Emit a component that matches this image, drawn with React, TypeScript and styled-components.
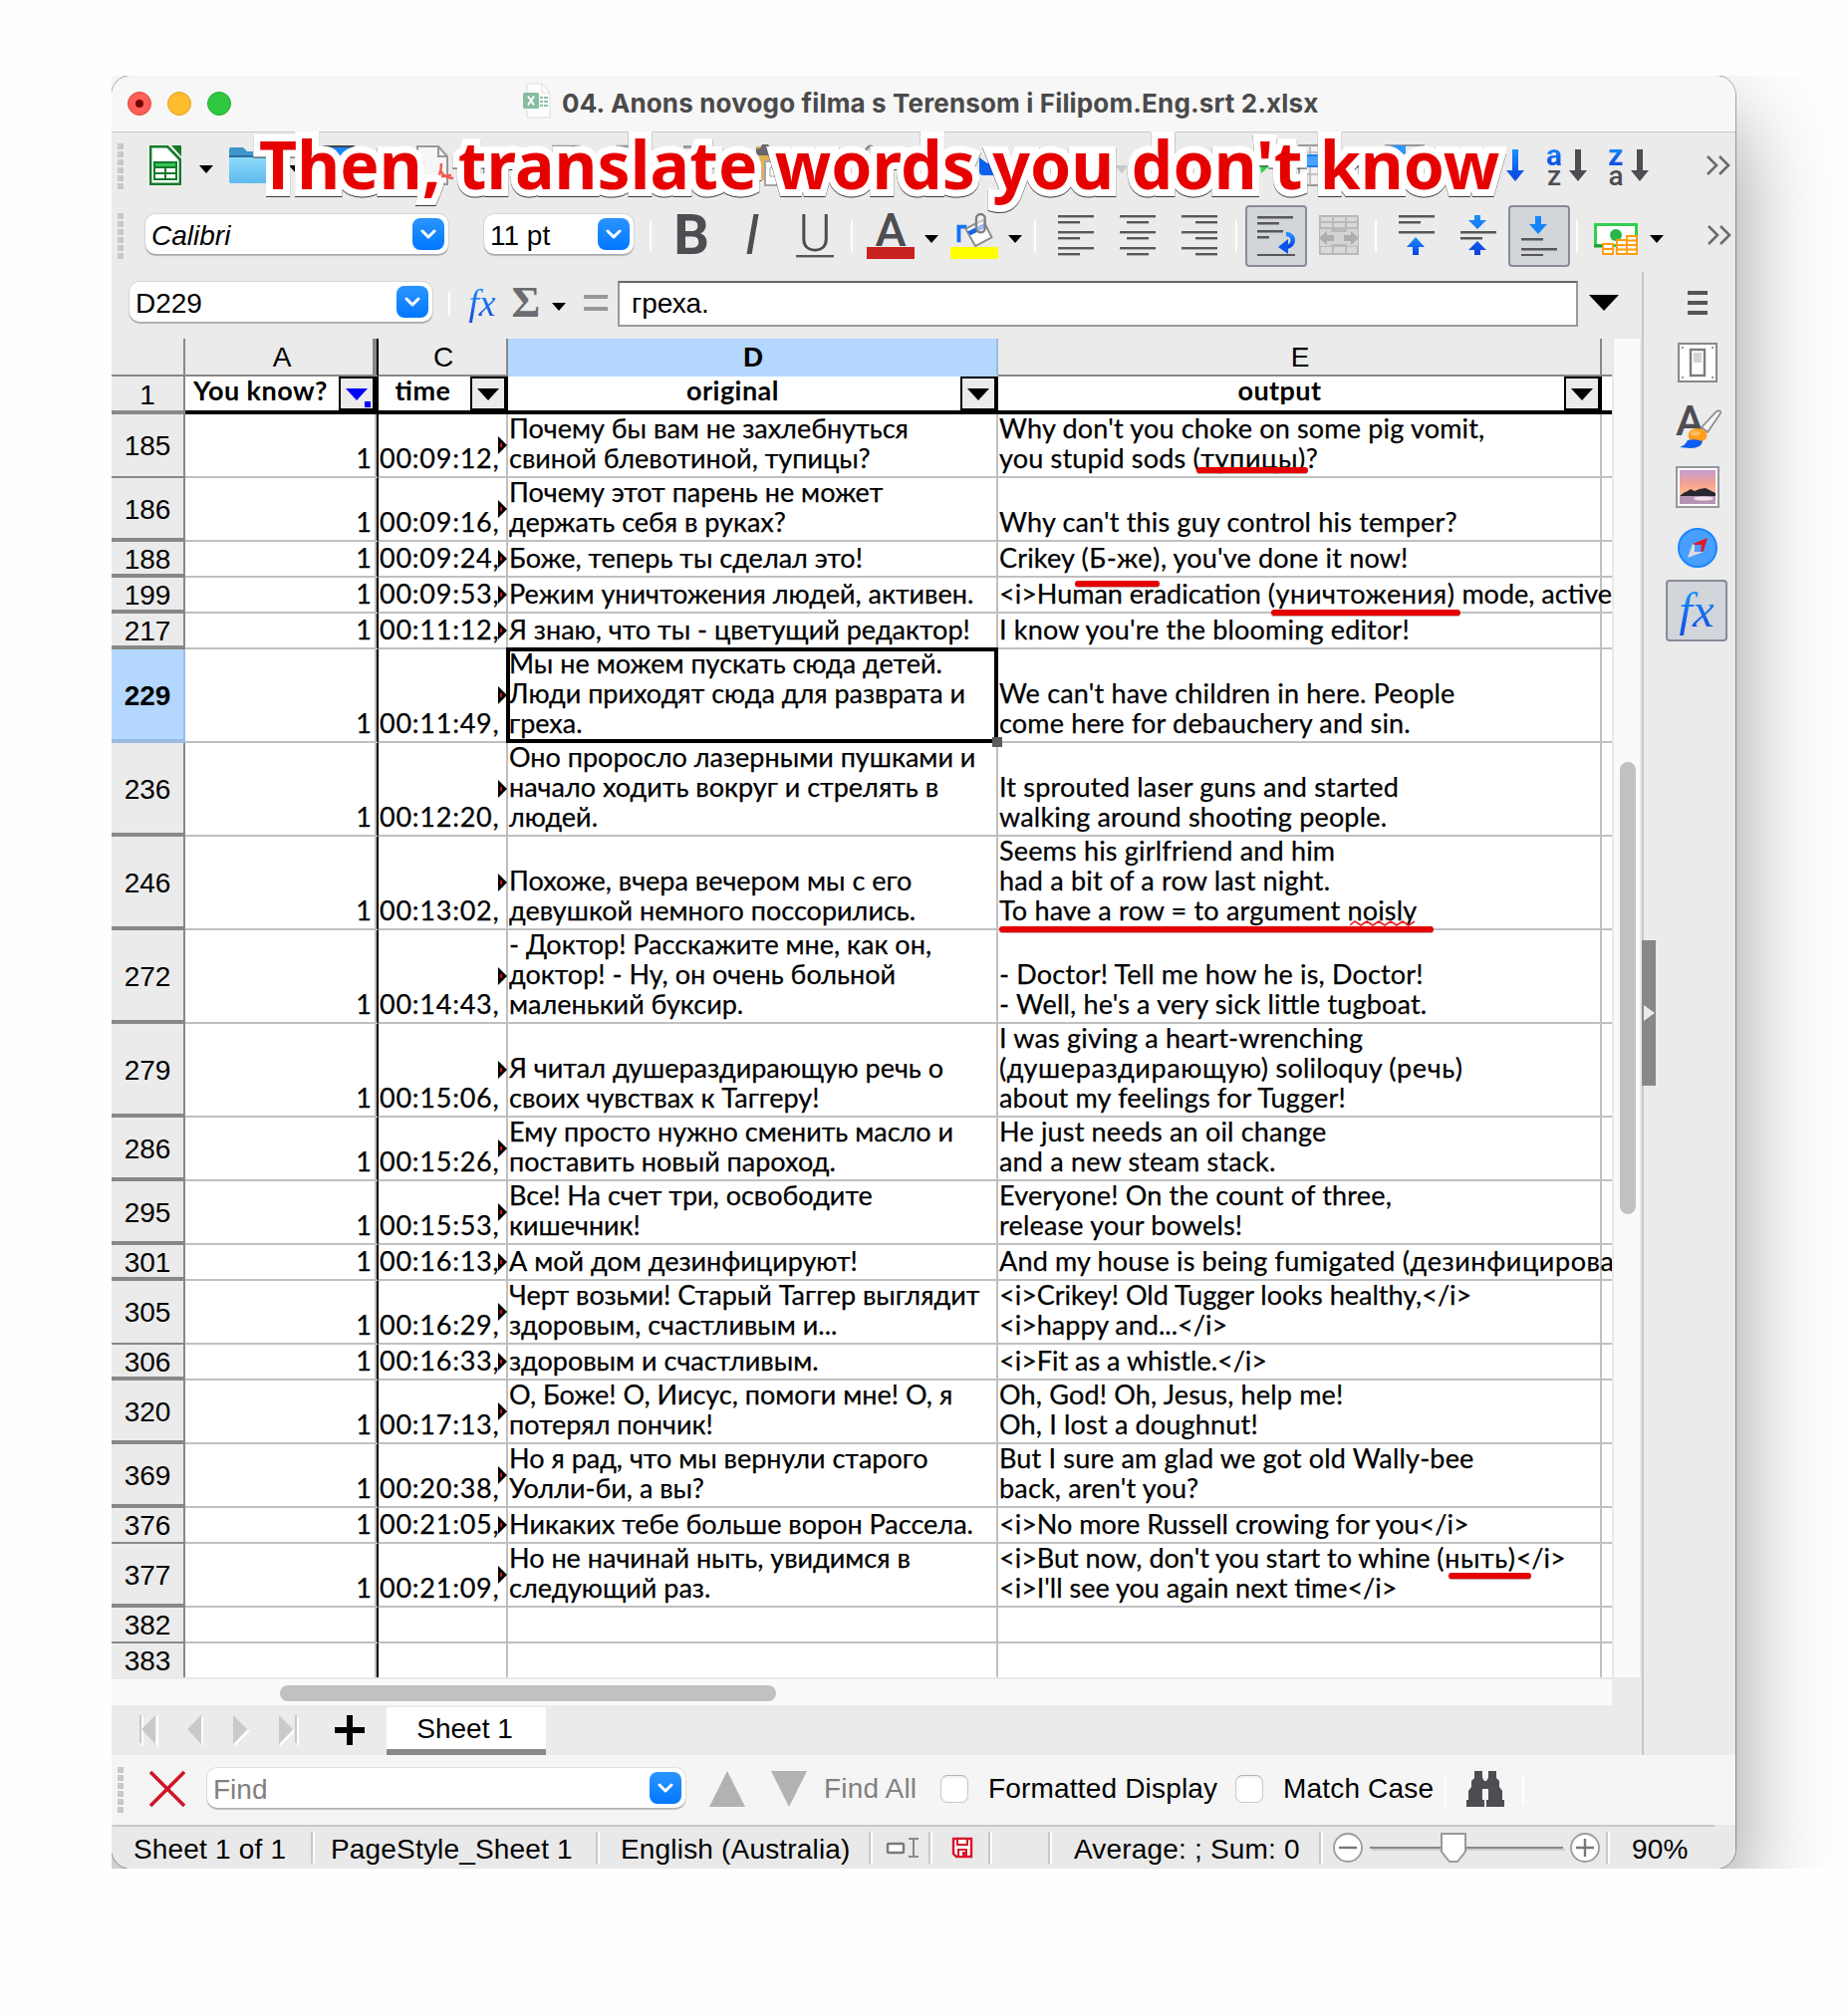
import React from "react";
import styled, { createGlobalStyle, css } from "styled-components";

const UI = `"Liberation Sans", Arial, sans-serif`;
const CELL = `Lato, "Open Sans", sans-serif`;
const GRAY = "#888888";
const BLUE = "#b3d7ff";

const Global = createGlobalStyle`
  * { box-sizing: border-box; }
  body { margin: 0; background: #fefefe; }
`;

const Page = styled.div`
  width: 1854px;
  height: 2024px;
  padding: 76px 0 0 112px;
  overflow: hidden;
  position: relative;
`;
const Stage = styled.div`
  width: 1730px;
  height: 1800px;
  overflow: hidden;
`;
const Window = styled.div`
  position: relative;
  width: 1630px;
  height: 1800px;
  border-radius: 20px;
  background: #ebebeb;
  box-shadow: 0 0 0 1px rgba(0, 0, 0, 0.32), 0 44px 96px rgba(0, 0, 0, 0.42);
  display: flex;
  flex-direction: column;
  font: 28px ${UI};
  color: #000;
`;

/* ---------- title bar ---------- */
const TitleBar = styled.div`
  height: 57px;
  flex: none;
  display: flex;
  align-items: center;
  background: #f7f7f7;
  border-bottom: 1px solid #c9c9c9;
  border-radius: 20px 20px 0 0;
  padding-left: 16px;
`;
const Light = styled.div<{ $c: string; $b: string }>`
  width: 24px;
  height: 24px;
  border-radius: 50%;
  background: ${(p) => p.$c};
  border: 1px solid ${(p) => p.$b};
  margin-right: 16px;
  display: grid;
  place-items: center;
`;
const LightDot = styled.i`
  width: 8px;
  height: 8px;
  border-radius: 50%;
  background: #730505;
`;
const FileIcon = styled.svg`
  margin: -6px 11px 0 277px;
`;
const Title = styled.div`
  font: 700 26px/56px Inter, sans-serif;
  letter-spacing: 0.15px;
  color: #4a4a4a;
  white-space: nowrap;
`;

/* ---------- tool bars ---------- */
const Bar = styled.div<{ $h: number; $pb?: number }>`
  height: ${(p) => p.$h}px;
  padding-bottom: ${(p) => p.$pb ?? 0}px;
  flex: none;
  display: flex;
  align-items: center;
`;
const Item = styled.div<{ $w: number; $ml?: number; $h?: number }>`
  width: ${(p) => p.$w}px;
  height: ${(p) => p.$h ?? 40}px;
  margin-left: ${(p) => p.$ml ?? 0}px;
  flex: none;
  display: flex;
  align-items: center;
  justify-content: center;
  svg { display: block; flex: none; overflow: visible; }
`;
const Grip = styled.div`
  width: 6px;
  height: 46px;
  margin: 2px 0 0 6px;
  flex: none;
  background: repeating-linear-gradient(#c8c8c8 0 6px, transparent 6px 8px);
`;
const Sep = styled.div<{ $ml: number; $h?: number }>`
  width: 2px;
  height: ${(p) => p.$h ?? 32}px;
  margin: 2px 0 0 ${(p) => p.$ml}px;
  flex: none;
  background: #fff;
`;
const Drop = styled.div<{ $ml: number; $c?: string }>`
  width: 14px;
  height: 8px;
  margin-left: ${(p) => p.$ml}px;
  margin-top: 8px;
  flex: none;
  background: ${(p) => p.$c ?? "#000"};
  clip-path: polygon(0 0, 100% 0, 50% 100%);
`;
const Combo = styled.div<{ $w: number; $ml: number }>`
  width: ${(p) => p.$w}px;
  height: 40px;
  margin: -2px 0 0 ${(p) => p.$ml}px;
  flex: none;
  display: flex;
  align-items: center;
  justify-content: space-between;
  padding: 0 4px 0 6px;
  background: #fff;
  border-radius: 10px;
  box-shadow: 0 0 0 1px rgba(0, 0, 0, 0.08), 0 2px 1px rgba(0, 0, 0, 0.22);
`;
const ComboText = styled.span<{ $italic?: boolean; $c?: string }>`
  font-style: ${(p) => (p.$italic ? "italic" : "normal")};
  color: ${(p) => p.$c ?? "#000"};
  line-height: 36px;
  padding-top: 4px;
`;
const ComboBtn = styled.span`
  width: 32px;
  height: 32px;
  border-radius: 8px;
  background: linear-gradient(#2b95ff, #0077ff);
  display: grid;
  place-items: center;
`;
const Letter = styled.span<{ $f: string; $c?: string }>`
  font: ${(p) => p.$f};
  color: ${(p) => p.$c ?? "#4d4d52"};
  white-space: nowrap;
`;
const BlueLetter = styled(Letter)`
  background: linear-gradient(#1a92ff 10%, #1257e6 80%);
  -webkit-background-clip: text;
  background-clip: text;
  color: transparent;
  padding: 0 6px;
  margin: 0 -6px;
`;
const Swatch = styled.div<{ $c: string }>`
  width: 48px;
  height: 12px;
  flex: none;
  background: ${(p) => p.$c};
`;
const ColorItem = styled.div<{ $ml: number }>`
  width: 48px;
  height: 46px;
  margin: 2px 0 0 ${(p) => p.$ml}px;
  flex: none;
  display: flex;
  flex-direction: column;
  align-items: center;
  justify-content: flex-end;
`;
const Pressed = styled.div<{ $ml: number }>`
  width: 62px;
  height: 62px;
  margin: 2px 0 0 ${(p) => p.$ml}px;
  flex: none;
  display: grid;
  place-items: center;
  background: #d2d5da;
  border: 2px solid #888b98;
  border-radius: 4px;
`;
const Stack = styled.div`
  display: flex;
  flex-direction: column;
  align-items: center;
`;

/* ---------- work area ---------- */
const Work = styled.div`
  height: 1489px;
  flex: none;
  display: flex;
`;
const Main = styled.div`
  width: 1536px;
  flex: none;
  display: flex;
  flex-direction: column;
`;
const Side = styled.div`
  flex: 1;
  border-left: 2px solid #c8c8c8;
  display: flex;
  flex-direction: column;
  align-items: center;
  padding: 15px 0 0 0;
  position: relative;
  svg { display: block; flex: none; overflow: visible; }
`;
const SideItem = styled.div<{ $h: number; $mt: number; $shift?: number }>`
  height: ${(p) => p.$h}px;
  margin: ${(p) => p.$mt}px 0 0 ${(p) => p.$shift ?? 0}px;
  flex: none;
`;
const Handle = styled.div`
  position: absolute;
  left: -2px;
  top: 671px;
  width: 14px;
  height: 146px;
  background: ${GRAY};
  display: flex;
  align-items: center;
  padding-left: 2px;
`;
const HandleTip = styled.i`
  width: 11px;
  height: 16px;
  background: #ebebeb;
  clip-path: polygon(0 0, 100% 50%, 0 100%);
`;
const Formula = styled.div`
  width: 964px;
  height: 46px;
  margin: 2px 0 0 10px;
  flex: none;
  background: #fff;
  border: 2px solid #999;
  border-top-color: #666;
  padding-left: 12px;
  line-height: 41px;
`;
const BigDrop = styled.div`
  width: 30px;
  height: 16px;
  margin: 0 0 0 11px;
  background: #000;
  clip-path: polygon(0 0, 100% 0, 50% 100%);
`;
const SheetArea = styled.div`
  height: 1344px;
  flex: none;
  display: flex;
`;
const Grid = styled.div`
  width: 1506px;
  height: 1344px;
  overflow: hidden;
  position: relative;
  background: #fff;
`;
const VScroll = styled.div`
  width: 30px;
  background: #fafafa;
  border: solid #e8e8e8;
  border-width: 0 2px;
  padding: 425px 0 0 6px;
`;
const VThumb = styled.div`
  width: 16px;
  height: 454px;
  border-radius: 8px;
  background: #c1c1c1;
`;
const HScroll = styled.div`
  width: 1506px;
  height: 28px;
  flex: none;
  background: #fafafa;
  border-top: 2px solid #e8e8e8;
  padding: 6px 0 0 169px;
`;
const HThumb = styled.div`
  width: 498px;
  height: 16px;
  border-radius: 8px;
  background: #c1c1c1;
`;

const Row = styled.div<{ $h: number }>`
  display: flex;
  height: ${(p) => p.$h}px;
`;
const Head = styled.div<{ $w: number; $on?: boolean; $freeze?: boolean }>`
  width: ${(p) => p.$w}px;
  flex: none;
  display: flex;
  align-items: center;
  justify-content: center;
  background: ${(p) => (p.$on ? BLUE : "#ebebeb")};
  border-right: 2px solid ${(p) => (p.$on ? "#9cbce0" : GRAY)};
  border-bottom: 2px solid ${(p) => (p.$on ? BLUE : GRAY)};
  font-weight: ${(p) => (p.$on ? 700 : 400)};
  padding: 2px 0 0 2px;
  ${(p) => p.$freeze && css`
    border-right: 2px solid #000;
    box-shadow: inset -4px 0 ${GRAY};
  `}
`;
const RowNo = styled.div<{ $on?: boolean; $thick?: boolean }>`
  width: 74px;
  flex: none;
  display: flex;
  align-items: center;
  justify-content: center;
  background: ${(p) => (p.$on ? BLUE : "#ebebeb")};
  border-right: 2px solid ${(p) => (p.$on ? "#9cbce0" : GRAY)};
  border-bottom: ${(p) => (p.$thick ? 4 : 2)}px solid ${(p) => (p.$on ? "#9cbce0" : GRAY)};
  padding-top: ${(p) => (p.$thick ? 4 : 2)}px;
  font-weight: ${(p) => (p.$on ? 700 : 400)};
`;
const Cell = styled.div<{ $w: number; $right?: boolean; $freeze?: boolean; $ls?: number }>`
  width: ${(p) => p.$w}px;
  flex: none;
  position: relative;
  display: flex;
  flex-direction: column;
  justify-content: flex-end;
  align-items: ${(p) => (p.$right ? "flex-end" : "flex-start")};
  border-right: 2px solid ${(p) => (p.$freeze ? "#000" : "#c0c0c0")};
  border-bottom: 2px solid #c0c0c0;
  padding: 0 ${(p) => (p.$freeze ? 5 : 2)}px 3px 1px;
  font: 27px/30px ${CELL};
  letter-spacing: ${(p) => (p.$ls ? `${p.$ls}px` : "normal")};
  -webkit-text-stroke: 0.25px #000;
  white-space: pre;
  ${(p) => p.$freeze && css`box-shadow: inset -2px 0 #c0c0c0;`}
`;
const Line = styled.span<{ $ls?: number }>`
  letter-spacing: ${(p) => (p.$ls ? `${p.$ls}px` : "normal")};
  font-feature-settings: "liga" 1;
`;
const Gloss = styled.span`
  letter-spacing: 0.6px;
`;
const Overflow = styled.i<{ $h: number }>`
  position: absolute;
  right: -1px;
  top: ${(p) => p.$h / 2 - 10}px;
  width: 9px;
  height: 18px;
  background: #000;
  clip-path: polygon(0 0, 100% 50%, 0 100%);
  &::after {
    content: "";
    position: absolute;
    left: 2px;
    top: 7px;
    width: 2px;
    height: 4px;
    background: #d01414;
  }
`;
const HCell = styled.div<{ $w: number; $freeze?: boolean }>`
  width: ${(p) => p.$w}px;
  height: 38px;
  flex: none;
  display: flex;
  border-bottom: 4px solid #000;
  ${(p) => p.$freeze && css`border-right: 2px solid #000;`}
`;
const HText = styled.div`
  flex: 1;
  text-align: center;
  font: 700 27px/27px ${CELL};
  letter-spacing: 0.45px;
  font-feature-settings: "liga" 1;
  white-space: nowrap;
  padding-right: 3px;
`;
const Filter = styled.div`
  width: 38px;
  height: 34px;
  flex: none;
  background: #ebebeb;
  border: 2px solid #000;
  border-right-width: 4px;
  display: grid;
  place-items: center;
  svg { display: block; }
`;
const Selection = styled.div`
  position: absolute;
  left: 396px;
  top: 310px;
  width: 494px;
  height: 96px;
  border: 4px solid #000;
  pointer-events: none;
`;
const FillHandle = styled.i`
  position: absolute;
  right: -8px;
  bottom: -8px;
  width: 10px;
  height: 10px;
  background: #5c5c5c;
`;
const Mark = styled.i<{ $x: number; $y: number; $w: number }>`
  position: absolute;
  left: ${(p) => p.$x}px;
  top: ${(p) => p.$y}px;
  width: ${(p) => p.$w}px;
  height: 6px;
  border-radius: 3px;
  background: #e60000;
  box-shadow: 0 1px 0 rgba(90, 0, 0, 0.35);
`;
const Squiggle = styled.svg`
  position: absolute;
  left: 1355px;
  top: 923px;
`;

/* ---------- tabs, find bar, status ---------- */
const Tabs = styled.div`
  height: 50px;
  flex: none;
  display: flex;
  align-items: flex-start;
`;
const Tab = styled.div`
  width: 160px;
  height: 48px;
  margin: 2px 0 0 22px;
  background: #fff;
  border-bottom: 6px solid ${GRAY};
  text-align: center;
  line-height: 43px;
  padding-right: 3px;
`;
const NavIcon = styled.svg<{ $ml: number }>`
  margin: 9px 0 0 ${(p) => p.$ml}px;
  flex: none;
  overflow: visible;
`;
const FindBar = styled.div`
  height: 70px;
  padding-bottom: 2px;
  flex: none;
  display: flex;
  align-items: center;
  background: #f5f5f5;
`;
const Label = styled.span<{ $ml: number; $w: number; $c?: string }>`
  margin-left: ${(p) => p.$ml}px;
  width: ${(p) => p.$w}px;
  flex: none;
  white-space: nowrap;
  color: ${(p) => p.$c ?? "#000"};
  line-height: 40px;
  letter-spacing: 0.18px;
`;
const Check = styled.span<{ $ml: number }>`
  width: 28px;
  height: 28px;
  margin-left: ${(p) => p.$ml}px;
  flex: none;
  background: #fff;
  border: 1px solid #c9c9c9;
  border-top-color: #b4b4b4;
  border-radius: 7px;
  box-shadow: inset 0 2px 2px rgba(0, 0, 0, 0.06);
`;
const Status = styled.div`
  height: 44px;
  flex: none;
  display: flex;
  align-items: center;
  background: linear-gradient(#c8c8c8, #c8c8c8) 1px 0 / 1608px 2px no-repeat, #e9e9e9;
  border-radius: 0 0 20px 20px;
  padding-top: 2px;
  ${Label} {
    line-height: 38px;
    padding-top: 4px;
  }
`;
const SSep = styled.div<{ $ml: number }>`
  width: 4px;
  height: 32px;
  margin-left: ${(p) => p.$ml}px;
  flex: none;
  background: linear-gradient(90deg, #c8c8c8 50%, #fff 50%);
`;

const Caption = styled.div`
  position: absolute;
  left: 260px;
  top: 118px;
  font: 700 66px/92px "Noto Sans", "Open Sans", sans-serif;
  letter-spacing: 0.1px;
  color: #e60000;
  white-space: nowrap;
  -webkit-text-stroke: 14px #fff;
  paint-order: stroke fill;
  stroke-linejoin: round;
  filter: drop-shadow(0 1px 0.5px rgba(0, 0, 0, 0.75));
`;

/* ---------- icons ---------- */
const INK = "#57575b";
type L = [number, number, number];
const Lines = ({ rows, w = 36, h = 40 }: { rows: L[]; w?: number; h?: number }) => (
  <svg width={w} height={h}>
    {rows.map(([x, y, len], i) => (
      <rect key={i} x={x} y={y} width={len} height="2.4" fill={INK} />
    ))}
  </svg>
);
const Chevron = () => (
  <svg width="16" height="10" viewBox="0 0 16 10">
    <path d="M2 2l6 6 6-6" fill="none" stroke="#fff" strokeWidth="3" strokeLinecap="round" strokeLinejoin="round" />
  </svg>
);
const More = () => (
  <svg width="25" height="20" viewBox="0 0 25 20">
    <path d="M2 1l9 9-9 9M14 1l9 9-9 9" fill="none" stroke="#6b6b6b" strokeWidth="2.600" />
  </svg>
);
const ArrowDown = ({ c }: { c: string }) => (
  <svg width="18" height="32" viewBox="0 0 18 32">
    <path d="M6 0h6v21h6L9 32 0 21h6z" fill={c} />
  </svg>
);
const HiddenSvg = styled.svg`
  position: absolute;
`;
const Defs = () => (
  <HiddenSvg width="0" height="0">
    <defs>
      <linearGradient id="bl" x1="0" y1="0" x2="0" y2="1">
        <stop offset="0" stopColor="#1a92ff" />
        <stop offset="1" stopColor="#0a3fe0" />
      </linearGradient>
      <linearGradient id="fold" x1="0" y1="0" x2="0" y2="1">
        <stop offset="0" stopColor="#8fdcfa" />
        <stop offset="1" stopColor="#5db9ec" />
      </linearGradient>
      <linearGradient id="sky" x1="0" y1="0" x2="0" y2="1">
        <stop offset="0" stopColor="#c79bd0" />
        <stop offset="0.45" stopColor="#f7a48c" />
        <stop offset="0.75" stopColor="#ffc39a" />
        <stop offset="1" stopColor="#b58fb4" />
      </linearGradient>
    </defs>
  </HiddenSvg>
);

/* ---------- data ---------- */
type R = [number, number, boolean, string, string[], string[]];
const rows: R[] = [
  [185, 64, false, "00:09:12,", ["Почему бы вам не захлебнуться", "свиной блевотиной, тупицы?"], ["Why don't you choke on some pig vomit,", "you stupid sods (тупицы)?"]],
  [186, 64, true, "00:09:16,", ["Почему этот парень не может", "держать себя в руках?"], ["Why can't this guy control his temper?"]],
  [188, 36, true, "00:09:24,", ["Боже, теперь ты сделал это!"], ["Crikey (Б-же), you've done it now!"]],
  [199, 36, true, "00:09:53,", ["Режим уничтожения людей, активен."], ["<i>Human eradication (уничтожения) mode, active"]],
  [217, 36, true, "00:11:12,", ["Я знаю, что ты - цветущий редактор!"], ["I know you're the blooming editor!"]],
  [229, 94, true, "00:11:49,", ["Мы не можем пускать сюда детей.", "Люди приходят сюда для разврата и", "греха."], ["We can't have children in here. People", "come here for debauchery and sin."]],
  [236, 94, true, "00:12:20,", ["Оно проросло лазерными пушками и", "начало ходить вокруг и стрелять в", "людей."], ["It sprouted laser guns and started", "walking around shooting people."]],
  [246, 94, true, "00:13:02,", ["Похоже, вчера вечером мы с его", "девушкой немного поссорились."], ["Seems his girlfriend and him", "had a bit of a row last night.", "To have a row = to argument noisly"]],
  [272, 94, true, "00:14:43,", ["- Доктор! Расскажите мне, как он,", "доктор! - Ну, он очень больной", "маленький буксир."], ["- Doctor! Tell me how he is, Doctor!", "- Well, he's a very sick little tugboat."]],
  [279, 94, true, "00:15:06,", ["Я читал душераздирающую речь о", "своих чувствах к Таггеру!"], ["I was giving a heart-wrenching", "(душераздирающую) soliloquy (речь)", "about my feelings for Tugger!"]],
  [286, 64, true, "00:15:26,", ["Ему просто нужно сменить масло и", "поставить новый пароход."], ["He just needs an oil change", "and a new steam stack."]],
  [295, 64, true, "00:15:53,", ["Все! На счет три, освободите", "кишечник!"], ["Everyone! On the count of three,", "release your bowels!"]],
  [301, 36, true, "00:16:13,", ["А мой дом дезинфицируют!"], ["And my house is being fumigated (дезинфицирова"]],
  [305, 64, false, "00:16:29,", ["Черт возьми! Старый Таггер выглядит", "здоровым, счастливым и..."], ["<i>Crikey! Old Tugger looks healthy,</i>", "<i>happy and...</i>"]],
  [306, 36, true, "00:16:33,", ["здоровым и счастливым."], ["<i>Fit as a whistle.</i>"]],
  [320, 64, true, "00:17:13,", ["О, Боже! О, Иисус, помоги мне! О, я", "потерял пончик!"], ["Oh, God! Oh, Jesus, help me!", "Oh, I lost a doughnut!"]],
  [369, 64, true, "00:20:38,", ["Но я рад, что мы вернули старого", "Уолли-би, а вы?"], ["But I sure am glad we got old Wally-bee", "back, aren't you?"]],
  [376, 36, false, "00:21:05,", ["Никаких тебе больше ворон Рассела."], ["<i>No more Russell crowing for you</i>"]],
  [377, 64, true, "00:21:09,", ["Но не начинай ныть, увидимся в", "следующий раз."], ["<i>But now, don't you start to whine (ныть)</i>", "<i>I'll see you again next time</i>"]],
  [382, 36, false, "", [], []],
  [383, 36, false, "", [], []],
];

/* English lines carry Russian glosses in brackets; those are set a little wider. */
const English = ({ text }: { text: string }) => (
  <Line $ls={text.startsWith("<i>") ? 0 : 0.18}>
    {text.split(/(\([а-яА-Я-]+\)?)/).map((part, i) => (i % 2 ? <Gloss key={i}>{part}</Gloss> : part))}
  </Line>
);

const FilterButton = ({ active }: { active?: boolean }) => (
  <Filter>
    <svg width="32" height="30">
      <path d="M5 10h22L16 22z" fill={active ? "#0000ff" : "#000"} />
      {active && <rect x="24" y="23" width="6" height="6" fill="#0000ff" />}
    </svg>
  </Filter>
);

export default function App() {
  return (
    <Page>
      <Global />
      <Defs />
      <Stage>
        <Window>
          <TitleBar>
            <Light $c="#ff5f57" $b="#e0443e"><LightDot /></Light>
            <Light $c="#febc2e" $b="#dfa023" />
            <Light $c="#2fc840" $b="#1dad2b" />
            <FileIcon width="28" height="36" viewBox="0 0 28 36">
              <path d="M4 1h15l8 9v25H4z" fill="#fdfdfd" stroke="#dcdcdc" />
              <path d="M19 1v9h8" fill="none" stroke="#dcdcdc" />
              <path d="M17 14h3v2h-3zm4 0h4v2h-4zm-4 4h3v2h-3zm4 0h4v2h-4zm-4 4h3v2h-3zm4 0h4v2h-4z" fill="#8dbfa4" />
              <rect x="0" y="10" width="16" height="16" rx="1.500" fill="#86bd9f" />
              <path d="M5 13.500l6 9M11 13.500l-6 9" stroke="#fff" strokeWidth="2" />
            </FileIcon>
            <Title>04. Anons novogo filma s Terensom i Filipom.Eng.srt 2.xlsx</Title>
          </TitleBar>

          <Bar $h={66}>
            <Grip />
            <Item $w={32} $ml={26}>
              <svg width="32" height="40" viewBox="0 0 32 40">
                <path d="M1.200 1.200H18L30.800 14v24.800H1.200z" fill="#fff" stroke="#157a2c" strokeWidth="2.400" />
                <path d="M22 0h10v11z" fill="#157a2c" />
                <path d="M18 1l13 14" stroke="#157a2c" strokeWidth="2" />
                <rect x="4" y="16" width="24" height="19" fill="#157a2c" />
                <path d="M6 18h20v3H6z" fill="#35c552" />
                <path d="M6 23h9v4H6zm11 0h9v4h-9zM6 29h9v4H6zm11 0h9v4h-9z" fill="#fff" />
              </svg>
            </Item>
            <Drop $ml={18} />
            <Item $w={42} $ml={16}>
              <svg width="42" height="36" viewBox="0 0 42 36">
                <path d="M0 2q0-2 2-2h12l4 4h22q2 0 2 2v8H0z" fill="#3f95c9" />
                <path d="M0 9h42v25q0 2-2 2H2q-2 0-2-2z" fill="url(#fold)" />
                <path d="M0 8h42v2H0z" fill="#2c6d9c" />
              </svg>
            </Item>
            <Drop $ml={18} />
            <Item $w={36} $ml={20}>
              <svg width="36" height="40" viewBox="0 0 36 40">
                <path d="M0 0h32v40H0z" fill="#434347" />
                <path d="M4 2h24v12H4z" fill="#1a84ff" />
                <path d="M6 20h22v18H6z" fill="#fff" />
              </svg>
            </Item>
            <Item $w={36} $ml={58}>
              <svg width="36" height="40" viewBox="0 0 36 40">
                <path d="M1 1h21l9 10v28H1z" fill="#f6f6f6" stroke="#98989c" strokeWidth="2" />
                <path d="M22 1v10h9" fill="none" stroke="#98989c" strokeWidth="2" />
                <path d="M25 18c0 10-3 16-8 20m7-13c3 6 7 8 13 8m-20 3c5-4 11-6 18-6" fill="none" stroke="#f4564e" strokeWidth="2.400" />
              </svg>
            </Item>
            <Item $w={40} $ml={28}>
              <svg width="40" height="40" viewBox="0 0 40 40">
                <rect x="3" y="22" width="37" height="10" fill="#9a9a9e" />
                <rect x="10" y="1" width="22" height="36" fill="#ebebeb" />
              </svg>
            </Item>
            <Item $w={44} $ml={30}>
              <svg width="44" height="40" viewBox="0 0 44 40">
                <path d="M2 1h28l8 8" fill="none" stroke="#98989c" strokeWidth="2.400" />
              </svg>
            </Item>
            <Item $w={44} $ml={0}>
              <svg width="44" height="40" viewBox="0 0 44 40">
                <path d="M22 1h20l8 8" fill="none" stroke="#98989c" strokeWidth="2.400" />
              </svg>
            </Item>
            <Item $w={40} $ml={44}>
              <svg width="40" height="40" viewBox="0 0 40 40">
                <path d="M2 0h20v3H2z" fill="#9a9a9e" />
              </svg>
            </Item>
            <Item $w={36} $ml={35}>
              <svg width="36" height="42" viewBox="0 0 36 42">
                <path d="M0 2h28v34H0z" fill="#e3b056" />
                <path d="M0 4h4l2-4h6l3 4h13v7H0z" fill="#68686c" />
                <path d="M9 17h22v24H9z" fill="#fff" stroke="#a5a5a8" strokeWidth="2" />
                <path d="M14 23h12v9H14z" fill="none" stroke="#a5a5a8" />
              </svg>
            </Item>
            <Item $w={14} $ml={73}>
              <svg width="14" height="40" viewBox="0 0 14 40">
                <path d="M1 5q4-7 8-2l2 4" fill="none" stroke="#8c8c90" strokeWidth="3" />
              </svg>
            </Item>
            <Item $w={30} $ml={101}>
              <svg width="30" height="40" viewBox="0 0 30 40">
                <path d="M0 12l8 6 8-6 14 4v14H4q-4 0-4-4z" fill="#0a5ff0" />
              </svg>
            </Item>
            <Drop $ml={106} $c="#c9c9c9" />
            <Item $w={20} $ml={132}>
              <svg width="20" height="40" viewBox="0 0 20 40">
                <path d="M0 20h10l-9 8z" fill="#2fd250" />
              </svg>
            </Item>
            <Item $w={40} $ml={18}>
              <svg width="40" height="42" viewBox="0 0 40 42">
                <path d="M1 1h38v40H1z" fill="#f2f2f2" stroke="#98989c" strokeWidth="2" />
                <path d="M1 8h38M1 30h38M12 1v40M26 1v40" stroke="#b6b6b9" strokeWidth="1.600" />
                <path d="M6 11h32v11H6z" fill="#48a0ff" stroke="#1d7df2" strokeWidth="2" />
              </svg>
            </Item>
            <Drop $ml={18} />
            <Item $w={42} $ml={14}>
              <svg width="42" height="42" viewBox="0 0 42 42">
                <path d="M1 1h40" stroke="#98989c" strokeWidth="2" />
                <path d="M6 1h16v10z" fill="#2f95ff" />
              </svg>
            </Item>
            <Item $w={18} $ml={81}><ArrowDown c="url(#bl)" /></Item>
            <Item $w={18} $ml={21}>
              <Stack>
                <BlueLetter $f="700 30px/21px Roboto, sans-serif">a</BlueLetter>
                <Letter $f="500 28px/21px Roboto, sans-serif">z</Letter>
              </Stack>
            </Item>
            <Item $w={18} $ml={6}><ArrowDown c="#4d4d52" /></Item>
            <Item $w={18} $ml={20}>
              <Stack>
                <BlueLetter $f="700 30px/21px Roboto, sans-serif">z</BlueLetter>
                <Letter $f="500 28px/21px Roboto, sans-serif">a</Letter>
              </Stack>
            </Item>
            <Item $w={18} $ml={6}><ArrowDown c="#4d4d52" /></Item>
            <Item $w={25} $ml={57}><More /></Item>
          </Bar>

          <Bar $h={74}>
            <Grip />
            <Combo $w={304} $ml={22}>
              <ComboText $italic>Calibri</ComboText>
              <ComboBtn><Chevron /></ComboBtn>
            </Combo>
            <Combo $w={150} $ml={36}>
              <ComboText>11 pt</ComboText>
              <ComboBtn><Chevron /></ComboBtn>
            </Combo>
            <Sep $ml={16} />
            <Item $w={32} $ml={24}><Letter $f="700 56px/40px Roboto, sans-serif">B</Letter></Item>
            <Item $w={16} $ml={37}><Letter $f="italic 400 56px/40px Roboto, sans-serif">I</Letter></Item>
            <Item $w={38} $ml={36} $h={48}>
              <Stack>
                <Letter $f="300 51px/42px Roboto, sans-serif">U</Letter>
                <svg width="38" height="3"><rect width="38" height="2.400" fill={INK} /></svg>
              </Stack>
            </Item>
            <Sep $ml={17} />
            <ColorItem $ml={14}>
              <Letter $f="500 47px/34px Roboto, sans-serif">A</Letter>
              <Swatch $c="#c9211e" />
            </ColorItem>
            <Drop $ml={10} />
            <ColorItem $ml={12}>
              <svg width="40" height="35" viewBox="0 0 40 35">
                <path d="M4 30V14h8" fill="none" stroke="#1374f5" strokeWidth="4" />
                <path d="M11 16l18-9 9 18-17 9z" fill="#fdfdfd" stroke="#8c8c90" strokeWidth="2" strokeLinejoin="round" />
                <path d="M13 19l18-9 1 5-16 8z" fill="#1763e8" />
                <rect x="22" y="1" width="9" height="19" rx="4.500" fill="#f4f4f4" fillOpacity="0.6" stroke="#7d7d82" strokeWidth="2.400" />
              </svg>
              <Swatch $c="#ffff00" />
            </ColorItem>
            <Drop $ml={10} />
            <Sep $ml={12} />
            <Item $w={36} $ml={22}><Lines rows={[[0, 0, 36], [0, 6, 22], [0, 16, 36], [0, 22, 22], [0, 32, 36], [0, 38, 22]]} /></Item>
            <Item $w={36} $ml={26}><Lines rows={[[0, 0, 36], [7, 6, 22], [0, 16, 36], [7, 22, 22], [0, 32, 36], [7, 38, 22]]} /></Item>
            <Item $w={36} $ml={26}><Lines rows={[[0, 0, 36], [14, 6, 22], [0, 16, 36], [14, 22, 22], [0, 32, 36], [14, 38, 22]]} /></Item>
            <Sep $ml={18} />
            <Pressed $ml={8}>
              <svg width="38" height="40" viewBox="0 0 38 40">
                <path d="M0 1.200h36M0 7.200h22M0 15.200h26M0 21.200h12M0 39.200h38" stroke={INK} strokeWidth="2.400" />
                <path d="M29 18c9 0 9 12 0 13" fill="none" stroke="url(#bl)" strokeWidth="4.500" />
                <path d="M21 31l10-8v15z" fill="#0d55ea" />
              </svg>
            </Pressed>
            <Item $w={40} $ml={12}>
              <svg width="40" height="40" viewBox="0 0 40 40">
                <path d="M1 1h38v38H1zM1 7h38M1 13h38M1 31h38M14 1v12M27 1v12M14 31v8M27 31v8" fill="#d9d9d9" stroke="#b9b9b9" strokeWidth="2" />
                <path d="M1 14h38v17H1z" fill="#d4d4d4" />
                <path d="M12 14h16v3H12zM12 29h16v2H12z" fill="#b9b9b9" />
                <path d="M0 23l8-7v4h7v6H8v4zM40 23l-8-7v4h-7v6h7v4z" fill="#adadad" />
              </svg>
            </Item>
            <Sep $ml={16} />
            <Item $w={36} $ml={22}>
              <svg width="36" height="40" viewBox="0 0 36 40">
                <path d="M0 1.200h36M0 7.200h22M0 17.200h36" stroke={INK} strokeWidth="2.400" />
                <path d="M17 22l9 10h-6v8h-6v-8H8z" fill="url(#bl)" />
              </svg>
            </Item>
            <Item $w={36} $ml={26}>
              <svg width="36" height="40" viewBox="0 0 36 40">
                <path d="M0 17.200h36M0 23.200h22" stroke={INK} strokeWidth="2.400" />
                <path d="M14 0h6v5h6l-9 9-9-9h6zM14 40h6v-5h6l-9-9-9 9h6z" fill="url(#bl)" />
              </svg>
            </Item>
            <Pressed $ml={12}>
              <svg width="36" height="40" viewBox="0 0 36 40">
                <path d="M0 23.200h22M0 33.200h36M0 39.200h22" stroke={INK} strokeWidth="2.400" />
                <path d="M14 0h6v8h6l-9 10L8 8h6z" fill="#1583fb" />
              </svg>
            </Pressed>
            <Sep $ml={6} />
            <Item $w={44} $ml={16}>
              <svg width="44" height="40" viewBox="0 0 44 40">
                <rect x="1.500" y="9.500" width="41" height="21" fill="#fff" stroke="#32cf50" strokeWidth="3" />
                <path d="M0 31h14" stroke="#1f9a3a" strokeWidth="3" />
                <circle cx="22" cy="20" r="6" fill="#2ab74a" />
                <g fill="#fff" stroke="#ff9a0a" strokeWidth="1.800">
                  <path d="M9 29h10v10H9zM9 34h10M23 25h10v14H23zM23 30h10M23 34.500h10M33 21h10v18H33zM33 25.500h10M33 30h10M33 34.500h10" />
                </g>
              </svg>
            </Item>
            <Drop $ml={12} />
            <Item $w={25} $ml={43}><More /></Item>
          </Bar>

          <Work>
            <Main>
              <Bar $h={67} $pb={5}>
                <Combo $w={304} $ml={18}>
                  <ComboText>D229</ComboText>
                  <ComboBtn><Chevron /></ComboBtn>
                </Combo>
                <Sep $ml={16} $h={24} />
                <Item $w={34} $ml={15}><BlueLetter $f="italic 400 38px/40px 'Liberation Serif', serif">fx</BlueLetter></Item>
                <Item $w={26} $ml={14}><Letter $f="700 44px/40px 'Liberation Serif', serif" $c="#6c6c70">Σ</Letter></Item>
                <Drop $ml={13} />
                <Item $w={24} $ml={18}>
                  <svg width="24" height="16"><path d="M0 2h24M0 14h24" stroke="#97979a" strokeWidth="4" /></svg>
                </Item>
                <Formula>греха.</Formula>
                <BigDrop />
              </Bar>
              <SheetArea>
                <Grid>
                  <Row $h={38}>
                    <Head $w={74} />
                    <Head $w={194} $freeze>A</Head>
                    <Head $w={130}>C</Head>
                    <Head $w={492} $on>D</Head>
                    <Head $w={606}>E</Head>
                    <Head $w={40} />
                  </Row>
                  <Row $h={38}>
                    <RowNo $thick>1</RowNo>
                    <HCell $w={194} $freeze><HText>You know?</HText><FilterButton active /></HCell>
                    <HCell $w={130}><HText>time</HText><FilterButton /></HCell>
                    <HCell $w={492}><HText>original</HText><FilterButton /></HCell>
                    <HCell $w={606}><HText>output</HText><FilterButton /></HCell>
                    <HCell $w={40} />
                  </Row>
                  {rows.map(([no, h, thick, time, d, e]) => (
                    <Row key={no} $h={h}>
                      <RowNo $on={no === 229} $thick={thick}>{no}</RowNo>
                      <Cell $w={194} $freeze $right>{time && "1"}</Cell>
                      <Cell $w={130} $ls={0.75}>
                        {time}
                        {time && <Overflow $h={h} />}
                      </Cell>
                      <Cell $w={492}>{d.map((t) => <Line key={t}>{t}</Line>)}</Cell>
                      <Cell $w={606}>{e.map((t) => <English key={t} text={t} />)}</Cell>
                      <Cell $w={40} />
                    </Row>
                  ))}
                  <Selection><FillHandle /></Selection>
                </Grid>
                <VScroll><VThumb /></VScroll>
              </SheetArea>
              <HScroll><HThumb /></HScroll>
              <Tabs>
                <NavIcon $ml={28} width="18" height="32">
                  <path d="M3 2v30M18 2v28L6 17" stroke="#fff" strokeWidth="2" fill="none" />
                  <path d="M0 1h2v28H0zM16 1v29L2 15z" fill="#c9c9c9" />
                </NavIcon>
                <NavIcon $ml={30} width="16" height="32">
                  <path d="M15 3v28" stroke="#fff" strokeWidth="2" />
                  <path d="M14 1v29L0 15z" fill="#c9c9c9" />
                </NavIcon>
                <NavIcon $ml={30} width="16" height="32">
                  <path d="M1 31l15-15" stroke="#fff" strokeWidth="2" />
                  <path d="M0 1v29l14-15z" fill="#c9c9c9" />
                </NavIcon>
                <NavIcon $ml={30} width="20" height="32">
                  <path d="M1 31l14-14M19 3v28" stroke="#fff" strokeWidth="2" />
                  <path d="M0 1v29l14-15zM16 1h2v28h-2z" fill="#c9c9c9" />
                </NavIcon>
                <NavIcon $ml={36} width="30" height="32">
                  <path d="M12 1h6v12h12v6H18v12h-6V19H0v-6h12z" fill="#000" />
                </NavIcon>
                <Tab>Sheet 1</Tab>
              </Tabs>
            </Main>
            <Side>
              <Handle><HandleTip /></Handle>
              <SideItem $h={24} $mt={4} $shift={16}>
                <svg width="20" height="24"><path d="M0 2h20M0 12h20M0 22h20" stroke="#555" strokeWidth="4" /></svg>
              </SideItem>
              <SideItem $h={40} $mt={28} $shift={16}>
                <svg width="40" height="40">
                  <rect x="1" y="1" width="38" height="38" fill="#fff" stroke="#88888c" strokeWidth="2" />
                  <rect x="13" y="7" width="14" height="26" fill="#fdfdfd" stroke="#7d7d7d" strokeWidth="2.400" />
                  <rect x="16" y="10" width="8" height="10" fill="#d4d4d4" />
                  <path d="M4 4h2v2H4zM34 4h2v2h-2zM4 34h2v2H4zM34 34h2v2h-2z" fill="#999" />
                </svg>
              </SideItem>
              <SideItem $h={44} $mt={22} $shift={20}>
                <svg width="44" height="44" viewBox="0 0 44 44">
                  <text x="-2" y="31" fontFamily="Roboto, sans-serif" fontWeight="500" fontSize="43" fill="#4d4d52">A</text>
                  <path d="M24 23L39 7q5-2 4 2L30 28z" fill="#f4f4f4" stroke="#8c8c90" strokeWidth="1.800" />
                  <ellipse cx="20" cy="31" rx="9.500" ry="7" fill="#ff9e1b" />
                  <ellipse cx="18" cy="29" rx="5" ry="3" fill="#ffbd5a" />
                  <path d="M2 43q6-2 8-7 7-2 15 1-1 7-12 7z" fill="#0b5ef2" />
                </svg>
              </SideItem>
              <SideItem $h={42} $mt={18} $shift={16}>
                <svg width="44" height="42">
                  <rect x="1" y="1" width="42" height="40" fill="#fff" stroke="#98989c" strokeWidth="2" />
                  <rect x="4" y="4" width="36" height="34" fill="url(#sky)" />
                  <path d="M4 30q4-4 8-5l3-2 4 2 5-2 6-1 6 3 4 2v3z" fill="#2a2630" />
                  <path d="M4 30h36v8H4z" fill="#b594b8" />
                  <ellipse cx="28" cy="32.500" rx="10" ry="2" fill="#f0e4ea" />
                </svg>
              </SideItem>
              <SideItem $h={40} $mt={20} $shift={16}>
                <svg width="40" height="40">
                  <circle cx="20" cy="20" r="19" fill="#479fff" stroke="#1b86ff" strokeWidth="2" />
                  <path d="M30 10L26 23l-3 2 1-8-7 0-2-1z" fill="#e21a2c" />
                  <path d="M10 30l5-14 2 1 0 7 7 0 2 0z" fill="#dcdcdc" />
                </svg>
              </SideItem>
              <SideItem $h={64} $mt={10} $shift={14}>
                <Pressed $ml={0}><BlueLetter $f="italic 400 49px/50px 'Liberation Serif', serif">fx</BlueLetter></Pressed>
              </SideItem>
            </Side>
          </Work>

          <FindBar>
            <Grip />
            <Item $w={36} $ml={26}>
              <svg width="36" height="36"><path d="M1 1l34 34M35 1L1 35" stroke="#cf1526" strokeWidth="3.600" /></svg>
            </Item>
            <Combo $w={480} $ml={22}>
              <ComboText $c="#808080">Find</ComboText>
              <ComboBtn><Chevron /></ComboBtn>
            </Combo>
            <Item $w={36} $ml={24}><svg width="36" height="36"><path d="M18 0l18 36H0z" fill="#b2b2b2" /></svg></Item>
            <Item $w={36} $ml={26}><svg width="36" height="36"><path d="M18 36L36 0H0z" fill="#b2b2b2" /></svg></Item>
            <Label $ml={17} $w={94} $c="#808080">Find All</Label>
            <Check $ml={23} />
            <Label $ml={20} $w={232}>Formatted Display</Label>
            <Check $ml={16} />
            <Label $ml={20} $w={152}>Match Case</Label>
            <Sep $ml={10} />
            <Item $w={38} $ml={20}>
              <svg width="38" height="36" viewBox="0 0 38 36">
                <path d="M8 0h8v7l2 3h2l2-3V0h8v7l3 3v6l3 4v9h2v7H20v-7h2V18h-6v11h2v7H0v-7h2v-9l3-4v-6l3-3z" fill="#4d4d52" />
              </svg>
            </Item>
            <Sep $ml={18} />
          </FindBar>

          <Status>
            <Label $ml={22} $w={154}>Sheet 1 of 1</Label>
            <SSep $ml={24} />
            <Label $ml={16} $w={244}>PageStyle_Sheet 1</Label>
            <SSep $ml={22} />
            <Label $ml={21} $w={232}>English (Australia)</Label>
            <SSep $ml={17} />
            <Item $w={32} $ml={14} $h={24}>
              <svg width="32" height="20">
                <rect x="1" y="6" width="16" height="9" rx="1" fill="#fff" stroke="#7a7a7a" strokeWidth="2.400" />
                <path d="M22 1h10M27 1v18M22 19h10" stroke="#8a8a8a" strokeWidth="2" fill="none" />
              </svg>
            </Item>
            <SSep $ml={10} />
            <Item $w={20} $ml={20} $h={26}>
              <svg width="20" height="20">
                <path d="M1 1h18v18H4l-3-3z" fill="#fff" stroke="#d9142a" strokeWidth="2.400" />
                <path d="M5 1h10v6H5zM6 12h8v7H6z" fill="#fff" stroke="#d9142a" strokeWidth="2" />
                <path d="M10 14h3v5h-3z" fill="#d9142a" />
              </svg>
            </Item>
            <SSep $ml={16} />
            <SSep $ml={56} />
            <Label $ml={22} $w={228}>Average: ; Sum: 0</Label>
            <SSep $ml={18} />
            <Item $w={30} $ml={10}>
              <svg width="30" height="30"><circle cx="15" cy="15" r="14" fill="#fff" stroke="#9c9c9c" strokeWidth="1.800" /><path d="M6 15h18" stroke="#777" strokeWidth="2.400" /></svg>
            </Item>
            <Item $w={194} $ml={7}>
              <svg width="194" height="30">
                <path d="M0 15h194" stroke="#888" strokeWidth="2" />
                <path d="M2 17h194" stroke="#cfcfcf" strokeWidth="2" />
                <path d="M72 1h24v18l-8 10h-8l-8-10z" fill="#fff" stroke="#9a9a9a" strokeWidth="2" />
              </svg>
            </Item>
            <Item $w={30} $ml={7}>
              <svg width="30" height="30"><circle cx="15" cy="15" r="14" fill="#fff" stroke="#9c9c9c" strokeWidth="1.800" /><path d="M6 15h18M15 6v18" stroke="#777" strokeWidth="2.400" /></svg>
            </Item>
            <SSep $ml={6} />
            <Label $ml={22} $w={60}>90%</Label>
          </Status>
        </Window>
      </Stage>
      <Mark $x={1201} $y={469} $w={112} />
      <Mark $x={1079} $y={583} $w={85} />
      <Mark $x={1276} $y={612} $w={190} />
      <Mark $x={1003} $y={930} $w={436} />
      <Mark $x={1454} $y={1579} $w={83} />
      <Squiggle width="68" height="8">
        <path d="M0 6l5-4 6 4 6-4 6 4 6-4 6 4 6-4 6 4 6-4 6 4 6-4" fill="none" stroke="#e62020" strokeWidth="1.600" />
      </Squiggle>
      <Caption>Then, translate words you don't know</Caption>
    </Page>
  );
}
